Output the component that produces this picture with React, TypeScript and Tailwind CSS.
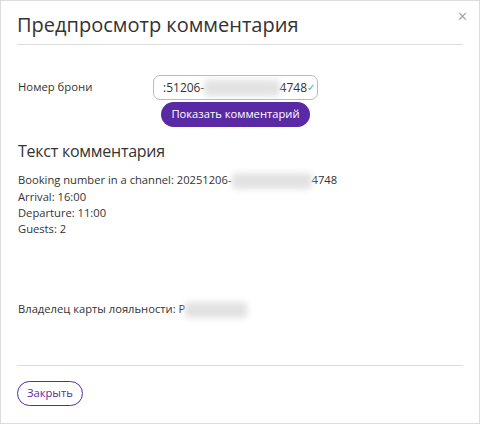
import React from 'react';

const Blur = ({ w }: { w: number }) => (
  <span
    className="inline-block h-[16px] align-middle bg-[#e2e2e2] blur-[3px] rounded-sm"
    style={{ width: w }}
  />
);

const App = () => {
  return (
    <div className="w-[480px] h-[424px] bg-white border border-[#dcdcdc] relative text-[#333] font-['Open_Sans',sans-serif]">
      <button className="absolute right-[11px] top-[9px] text-[#aaa] text-[13px] leading-none">✕</button>

      <div className="px-[16px]">
        <h1 className="text-[20px] leading-[30px] pt-[9px] pb-[4px] border-b border-[#dcdcdc] text-[#333]">
          Предпросмотр комментария
        </h1>

        <div className="mt-[30px] flex items-start">
          <div className="w-[136px] pl-[1px] text-[11.3px] leading-[24px]">Номер брони</div>
          <div className="flex flex-col items-center">
            <div className="w-[165px] h-[25px] border border-[#bbb] rounded-[7px] flex items-center pl-[9px] pr-[2px] text-[12px] overflow-hidden">
              <span>:51206-</span>
              <Blur w={84} />
              <span>4748</span>
              <span className="text-[#35b2a3] text-[10px]">✓</span>
            </div>
            <button className="mt-[2px] h-[25px] px-[10px] rounded-full bg-[#5a2aa4] text-white text-[11.2px]">
              Показать комментарий
            </button>
          </div>
        </div>

        <h2 className="mt-[11px] pl-[1px] text-[16px] tracking-[-0.25px] leading-[26px]">Текст комментария</h2>

        <div className="mt-[8px] pl-[1px] text-[11.2px] leading-[16px]">
          <div>
            Booking number in a channel: 20251206-<Blur w={80} />4748
          </div>
          <div>Arrival: 16:00</div>
          <div>Departure: 11:00</div>
          <div>Guests: 2</div>
        </div>

        <div className="mt-[64px] pl-[1px] text-[11.2px] leading-[16px]">
          Владелец карты лояльности: P<Blur w={62} />
        </div>

        <div className="mt-[47px] border-t border-[#dcdcdc]" />

        <button className="mt-[15px] h-[25px] px-[9px] rounded-full border border-[#5a2aa4] text-[#5a2aa4] text-[11.2px]">
          Закрыть
        </button>
      </div>
    </div>
  );
};

export default App;
